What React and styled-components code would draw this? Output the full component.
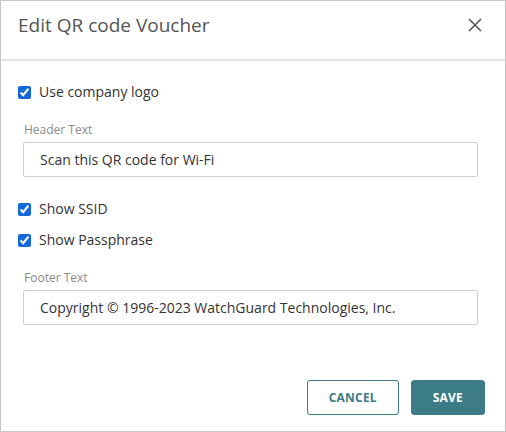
import React from "react";
import styled, { createGlobalStyle } from "styled-components";

const Global = createGlobalStyle`
	html, body {
		margin: 0;
		padding: 0;
		background: #ffffff;
	}
	* {
		box-sizing: border-box;
	}
`;

const App = () => {
	return (
		<>
			<Global />
			<Dialog>
				<Header>
					<Title>Edit QR code Voucher</Title>
					<Close aria-label="Close">
						<svg width="14" height="14" viewBox="0 0 14 14">
							<path
								d="M1 1L13 13M13 1L1 13"
								stroke="#555"
								strokeWidth="1.6"
								fill="none"
							/>
						</svg>
					</Close>
				</Header>

				<Body>
					<CheckRow>
						<Check type="checkbox" defaultChecked />
						Use company logo
					</CheckRow>

					<Field>
						<FieldLabel>Header Text</FieldLabel>
						<Input defaultValue="Scan this QR code for Wi-Fi" />
					</Field>

					<CheckRow>
						<Check type="checkbox" defaultChecked />
						Show SSID
					</CheckRow>
					<CheckRow $gap>
						<Check type="checkbox" defaultChecked />
						Show Passphrase
					</CheckRow>

					<Field $last>
						<FieldLabel>Footer Text</FieldLabel>
						<Input defaultValue="Copyright © 1996-2023 WatchGuard Technologies, Inc." />
					</Field>
				</Body>

				<Footer>
					<Button>CANCEL</Button>
					<Button $primary>SAVE</Button>
				</Footer>
			</Dialog>
		</>
	);
};

export default App;

const Dialog = styled.div`
	width: 506px;
	height: 432px;
	border: 1px solid #c6c6c6;
	background: #fff;
	display: flex;
	flex-direction: column;
	font-family: "Open Sans", "Liberation Sans", sans-serif;
`;

const Header = styled.div`
	height: 60px;
	padding: 11px 23px 0 17px;
	border-bottom: 2px solid #e3e3e3;
	display: flex;
	justify-content: space-between;
	align-items: flex-start;
`;

const Title = styled.div`
	font-size: 19px;
	line-height: 26px;
	color: #555;
`;

const Close = styled.div`
	margin-top: 6px;
	width: 14px;
	height: 14px;
	display: flex;
	cursor: pointer;
`;

const Body = styled.div`
	padding: 21px 21px 0 17px;
	display: flex;
	flex-direction: column;
`;

const CheckRow = styled.label`
	display: flex;
	align-items: center;
	gap: 8px;
	font-size: 14px;
	line-height: 20px;
	color: #333;
	margin-top: ${(p) => (p.$gap ? "11px" : "0")};
`;

const Check = styled.input`
	width: 13px;
	height: 13px;
	margin: 0;
	accent-color: #1467d9;
`;

const Field = styled.div`
	margin: ${(p) => (p.$last ? "19px 6px 0 5px" : "19px 6px 22px 5px")};
	display: flex;
	flex-direction: column;
`;

const FieldLabel = styled.div`
	font-size: 12px;
	line-height: 18px;
	color: #8a8a8a;
	padding-left: 1px;
	margin-bottom: 3px;
`;

const Input = styled.input`
	height: 35px;
	border: 1px solid #cfcfcf;
	border-radius: 2px;
	padding: 0 16px;
	font-family: inherit;
	font-size: 14px;
	color: #333;
	outline: none;
`;

const Footer = styled.div`
	margin-top: auto;
	padding: 0 20px 16px;
	display: flex;
	justify-content: flex-end;
	gap: 12px;
`;

const Button = styled.button`
	height: 35px;
	padding: 0 21px;
	border: 1px solid #3b7c86;
	border-radius: 3px;
	background: ${(p) => (p.$primary ? "#3b7c86" : "#fff")};
	color: ${(p) => (p.$primary ? "#fff" : "#3b7c86")};
	font-family: inherit;
	font-size: 12px;
	font-weight: 700;
	letter-spacing: 0.2px;
	cursor: pointer;
`;
